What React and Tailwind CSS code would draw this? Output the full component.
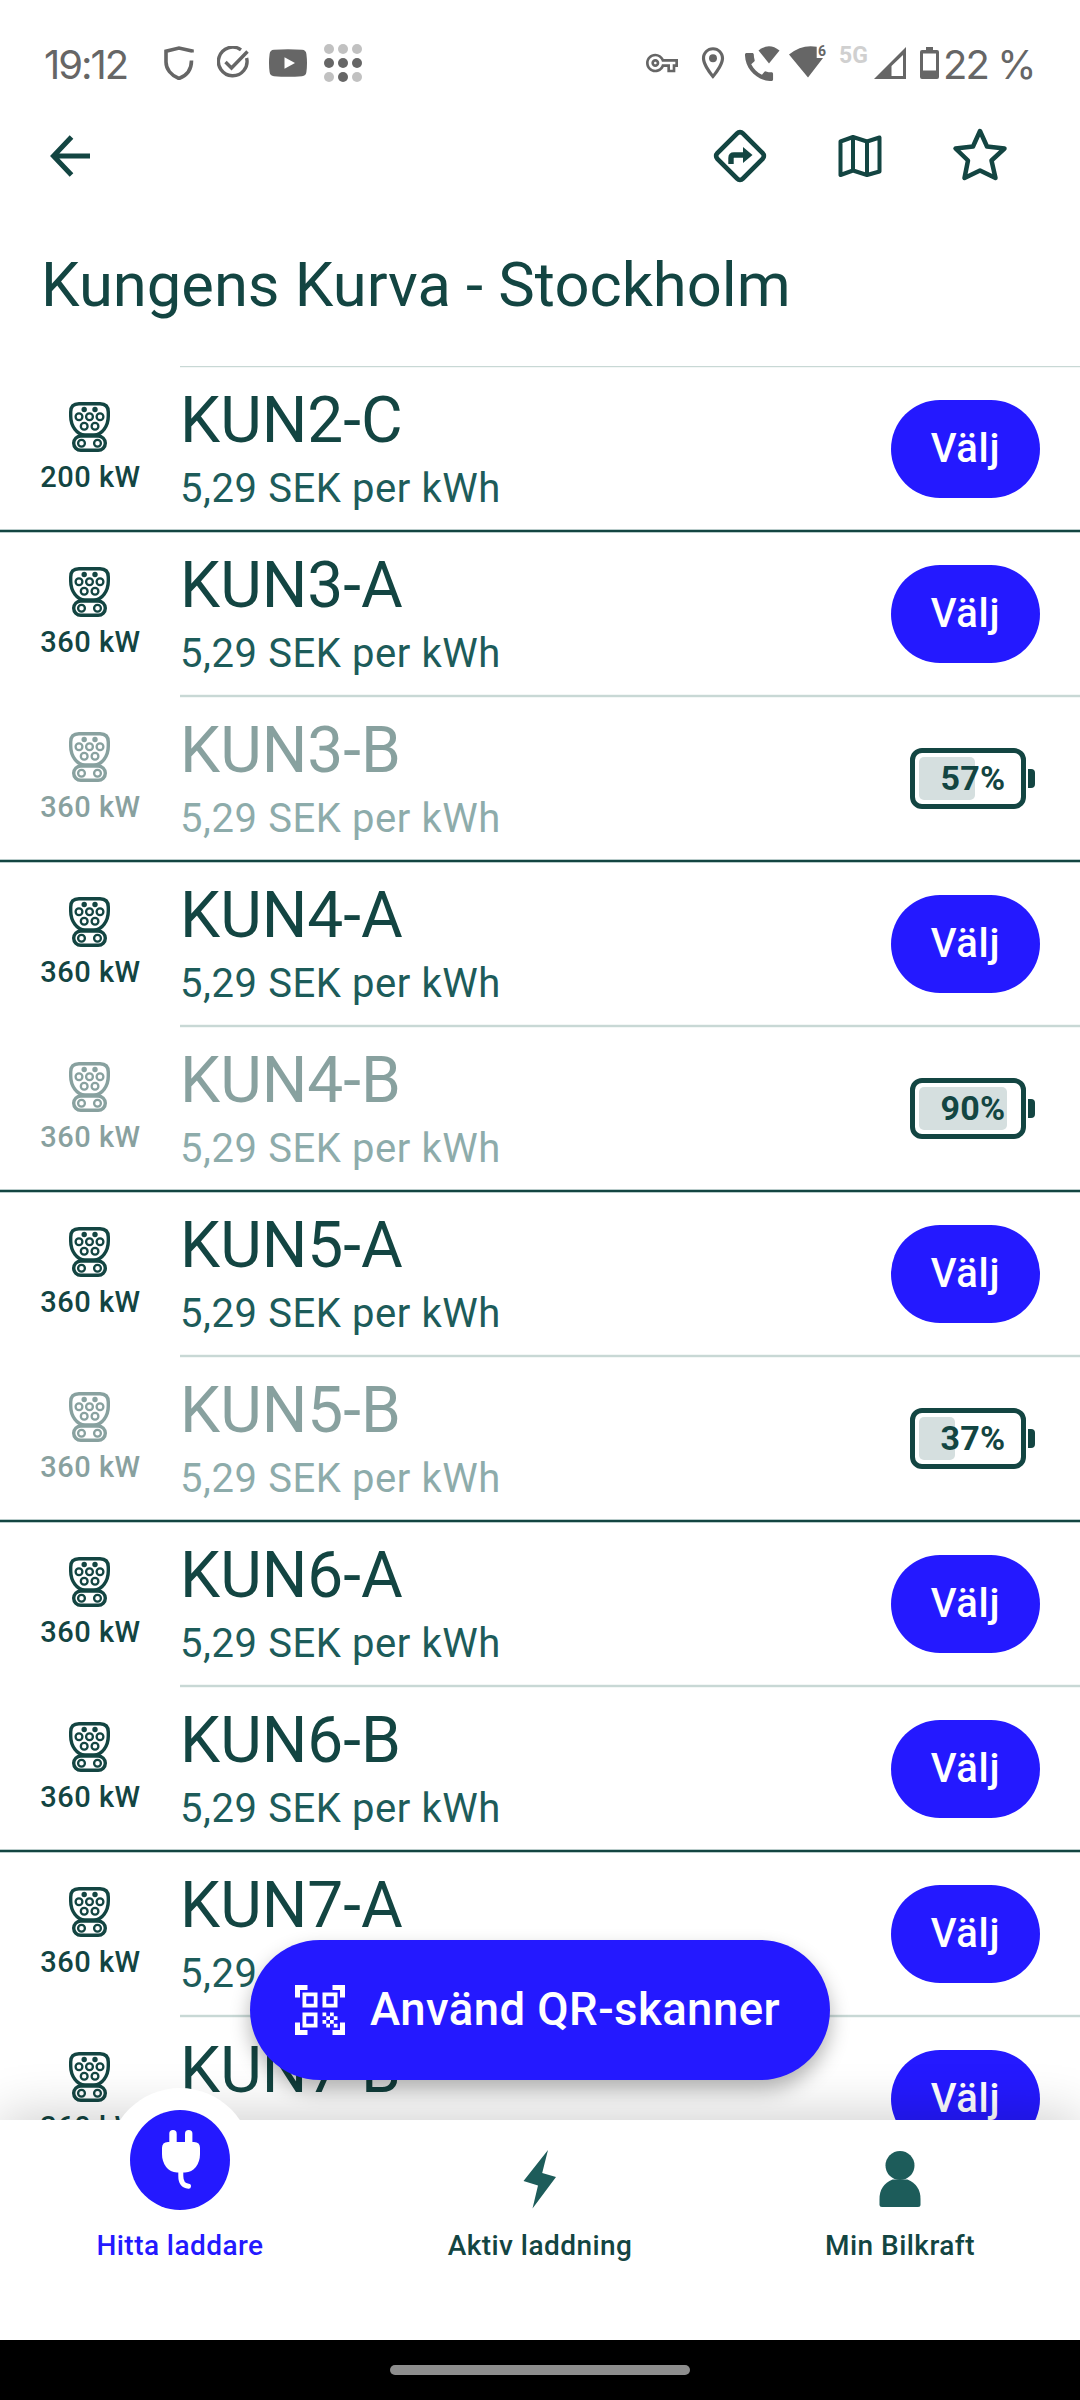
import React from 'react';
import { MdOutlineVpnKey, MdOutlineLocationOn, MdQrCodeScanner } from 'react-icons/md';

const chargers = [
  { id: 'KUN2-C', power: 200, group: true },
  { id: 'KUN3-A', power: 360 },
  { id: 'KUN3-B', power: 360, percent: 57, group: true },
  { id: 'KUN4-A', power: 360 },
  { id: 'KUN4-B', power: 360, percent: 90, group: true },
  { id: 'KUN5-A', power: 360 },
  { id: 'KUN5-B', power: 360, percent: 37, group: true },
  { id: 'KUN6-A', power: 360 },
  { id: 'KUN6-B', power: 360, group: true },
  { id: 'KUN7-A', power: 360 },
  { id: 'KUN7-B', power: 360, group: true },
];

const StatusBar = () => (
  <div className="h-[126px] flex items-center justify-between pl-[44px] pr-[45px] text-[#666666]">
    <div className="flex items-center">
      <span className="w-[120px] pt-[3px] text-[40px] leading-none tracking-[-2px] font-[Inter,sans-serif]">19:12</span>

      {/* Shield */}
      <svg className="w-[30px] h-[34px]" viewBox="0 0 30 34" fill="none" stroke="currentColor" strokeWidth="3.6">
        <path d="M28 6.5V5L15 2L2 5.2V16C2 23 7 29.5 15 32.5C23 29.5 27.5 23 27.5 14.5" />
      </svg>

      {/* Check */}
      <svg className="w-[32px] h-[34px] ml-[23px]" viewBox="0 0 32 34" fill="none" stroke="currentColor" strokeWidth="3.4">
        <path d="M24 3.8A14.3 14.3 0 1 0 29.6 12" />
        <path d="M8.5 16L14.5 22L30.5 5.5" />
      </svg>

      {/* YouTube */}
      <svg className="w-[38px] h-[28px] ml-[20px]" viewBox="0 0 38 28">
        <path fill="currentColor" d="M5 .8Q19-.4 33 .8Q37 1 37.4 5Q38.6 14 37.4 23Q37 27 33 27.2Q19 28.4 5 27.2Q1 27 .6 23Q-.6 14 .6 5Q1 1 5 .8Z" />
        <path fill="#fff" d="M15.5 8.2L26 14L15.5 19.8Z" />
      </svg>

      {/* Dot grid */}
      <svg className="w-[38px] h-[38px] ml-[17px]" viewBox="0 0 38 38" fill="currentColor">
        <g opacity="0.4">
          <circle cx="5" cy="5" r="5" />
          <circle cx="19" cy="5" r="5" />
          <circle cx="33" cy="5" r="5" />
          <circle cx="5" cy="33" r="5" />
          <circle cx="33" cy="33" r="5" />
        </g>
        <circle cx="5" cy="19" r="5" />
        <circle cx="19" cy="19" r="5" />
        <circle cx="33" cy="19" r="5" />
        <circle cx="19" cy="33" r="5" />
      </svg>
    </div>

    <div className="flex items-center">
      <MdOutlineVpnKey className="w-[32px] h-[32px]" />
      <MdOutlineLocationOn className="w-[38px] h-[38px] ml-[16px]" />

      {/* Wifi calling */}
      <svg className="w-[35px] h-[35px] ml-[13px]" viewBox="0 0 35 35" fill="currentColor">
        <path d="M13.5 4.5Q24-4 34.5 4.5L24 17.5Z" />
        <path
          transform="translate(-4.7 2.3) scale(1.56)"
          d="M20.01 15.38c-1.23 0-2.42-.2-3.53-.56a.977.977 0 0 0-1.01.24l-1.57 1.97c-2.83-1.35-5.48-3.9-6.89-6.83l1.95-1.66c.27-.28.35-.67.24-1.02-.37-1.11-.56-2.3-.56-3.53 0-.54-.45-.99-.99-.99H4.19C3.65 3 3 3.24 3 3.99 3 13.28 10.73 21 20.01 21c.71 0 .99-.63.99-1.18v-3.45c0-.54-.45-.99-.99-.99z"
        />
      </svg>

      {/* Wifi 6 */}
      <svg className="w-[38px] h-[34px] ml-[9px] overflow-visible" viewBox="0 0 38 34">
        <path fill="currentColor" d="M0 8.5Q13-2 27.7 .8V12H34L19 31.5Z" />
        <text x="29" y="10.3" fontSize="14" fontWeight="700" fontFamily="Roboto" fill="currentColor">6</text>
      </svg>

      <span className="w-[28px] text-[23px] leading-none font-bold text-[#d0d0d0] font-[Roboto,sans-serif] ml-[12px] mb-[16px]">5G</span>

      {/* Mobile signal */}
      <svg className="w-[32px] h-[32px] ml-[7px]" viewBox="0 0 32 32">
        <path fill="currentColor" fillRule="evenodd" d="M32 0V32H0ZM29 8L17.5 19V29H29Z" />
      </svg>

      {/* Battery */}
      <svg className="w-[19px] h-[32px] ml-[14px]" viewBox="0 0 19 32">
        <path fill="currentColor" fillRule="evenodd" d="M6 0H13V3H17Q19 3 19 5V30Q19 32 17 32H2Q0 32 0 30V5Q0 3 2 3H6ZM3 6.5V23.5H16V6.5Z" />
      </svg>

      <span className="w-[96px] pl-[4px] pt-[3px] text-[40px] leading-none tracking-[-1.9px] whitespace-nowrap font-[Inter,sans-serif]">22 %</span>
    </div>
  </div>
);

const AppBar = () => (
  <div className="h-[60px] flex items-center justify-between pl-[50px] pr-[72px]">
    <svg className="w-[40px] h-[42px]" viewBox="0 0 40 42" fill="none" stroke="currentColor" strokeWidth="5">
      <path d="M21.5 2L3.5 21L21.5 40M3.5 21H40" />
    </svg>

    <div className="flex items-center">
      <svg className="w-[56px] h-[56px]" viewBox="0 0 56 56">
        <rect x="10" y="10" width="36" height="36" rx="4" transform="rotate(45 28 28)" fill="none" stroke="currentColor" strokeWidth="4.8" />
        <path d="M19 36V30Q19 27 22 27H32" fill="none" stroke="currentColor" strokeWidth="5.4" />
        <path d="M31 19L40.5 27L31 35Z" fill="currentColor" />
      </svg>
      <svg className="w-[44px] h-[44px] ml-[70px]" viewBox="0 0 44 44" fill="none" stroke="currentColor" strokeWidth="4" strokeLinejoin="round">
        <path d="M2.5 7.5L15 3L29 7.5L41.5 3.5V37.5L29 41L15 36.5L2.5 41Z" />
        <path d="M15 3V36.5M29 7.5V41" />
      </svg>
      <svg className="w-[56px] h-[56px] ml-[70px]" viewBox="0 0 56 56" fill="none" stroke="currentColor" strokeWidth="4.5" strokeLinejoin="round">
        <path d="M28 3L35 18.5L52.5 20.5L39.5 32.5L43.5 50L28 42.5L12.5 50L16 32.5L3.5 20.5L21 18.5Z" />
      </svg>
    </div>
  </div>
);

const CcsIcon = () => (
  <svg className="w-[41px] h-[50px] mr-[2px]" viewBox="0 0 41 50" fill="none" stroke="currentColor" strokeWidth="3.4">
    <path d="M10 1.7H31Q39.3 1.7 39.3 10V14C39.3 24 33 33 25 33H16C8 33 1.7 24 1.7 14V10Q1.7 1.7 10 1.7Z" />
    <rect x="4.7" y="34" width="31.6" height="14.3" rx="7.1" />
    <circle cx="15.2" cy="7.5" r="2.7" fill="currentColor" stroke="none" />
    <circle cx="26" cy="7.5" r="2.7" fill="currentColor" stroke="none" />
    <g strokeWidth="2.3">
      <circle cx="10" cy="14.8" r="3.4" />
      <circle cx="20.5" cy="14.8" r="3.4" />
      <circle cx="31" cy="14.8" r="3.4" />
      <circle cx="15.2" cy="24.3" r="3.4" />
      <circle cx="26" cy="24.3" r="3.4" />
      <circle cx="12.5" cy="41.2" r="3.4" />
      <circle cx="28.5" cy="41.2" r="3.4" />
    </g>
  </svg>
);

const BatteryLevel = ({ percent }) => (
  <div className="flex items-center gap-[2px] mr-[45px]">
    <div className="relative w-[116px] h-[61px] rounded-[12px] border-[5px] border-[#134542] p-[4px]">
      <div className="h-full rounded-[5px] bg-[#d5dfdf]" style={{ width: `${percent}%` }}></div>
      <span className="absolute inset-0 pl-[10px] flex items-center justify-center text-[34px] tracking-[0.2px] font-bold">{percent}%</span>
    </div>
    <div className="w-[7px] h-[19px] rounded-r-[4px] bg-[#134542]"></div>
  </div>
);

const ChargerRow = ({ charger }) => {
  const busy = charger.percent !== undefined;
  return (
    <div className="shrink-0">
      <div className="h-[161px] flex items-start">
        <div className={`flex-1 h-full flex ${busy ? 'opacity-50' : ''}`}>
          <div className="w-[180px] pt-[34px] flex flex-col items-center gap-[9px]">
            <CcsIcon />
            <span className="pl-px text-[29px] leading-[32px] font-medium tracking-[0.5px] whitespace-nowrap">{charger.power} kW</span>
          </div>
          <div className="pt-[21px] flex flex-col gap-[12px]">
            <span className="text-[64px] leading-[64px]">{charger.id}</span>
            <span className="text-[40px] leading-[48px] tracking-[0.58px] text-[#1d5c5a]">5,29 SEK per kWh</span>
          </div>
        </div>
        {busy ? (
          <div className="pt-[50px]">
            <BatteryLevel percent={charger.percent} />
          </div>
        ) : (
          <button className="w-[149px] h-[98px] mt-[31.5px] mr-[40px] rounded-full bg-[#2419ff] text-white text-[40px] tracking-[0.7px] font-medium">Välj</button>
        )}
      </div>
      {charger.group ? (
        <div className="h-[4px] bg-[#134542] border-y border-[#b9cccb]"></div>
      ) : (
        <div className="h-[4px] ml-[180px] bg-[#c8d8d5] border-y border-[#f3f7f6]"></div>
      )}
    </div>
  );
};

const NavBar = () => (
  <div className="relative z-10 h-[220px] grid grid-cols-3 bg-white text-[28px] font-medium tracking-[0.45px] shadow-[0_-4px_50px_rgba(0,0,0,0.2)]">
    {/* White bump behind the active tab */}
    <div className="absolute left-[108px] top-[-32px] w-[144px] h-[144px] rounded-full bg-white"></div>

    <div className="relative flex flex-col items-center text-[#2419ff]">
      <div className="w-[100px] h-[100px] mt-[-10px] rounded-full bg-[#2419ff] flex justify-center pt-[20px] pl-[2px]">
        <svg className="w-[38px] h-[59px]" viewBox="0 0 38 59" fill="#fff">
          <rect x="7.3" y="0" width="7.4" height="20" rx="3.7" />
          <rect x="23" y="0" width="7.4" height="20" rx="3.7" />
          <path d="M6 12H32Q38 12 38 18V24C38 34 32 42.5 23 42.5H15C6 42.5 0 34 0 24V18Q0 12 6 12Z" />
          <path d="M18.8 40V46Q18.8 55.5 26.5 56.2" fill="none" stroke="#fff" strokeWidth="5" strokeLinecap="round" />
        </svg>
      </div>
      <span className="mt-[20px] leading-[32px]">Hitta laddare</span>
    </div>

    <div className="relative flex flex-col items-center pt-[30px]">
      <svg className="w-[34px] h-[59px] fill-[#1d5c5a]" viewBox="0 0 34 59">
        <path d="M25 0L19.2 23L33 27L9.5 58.5L15 35.5L.5 31Z" />
      </svg>
      <span className="mt-[21px] leading-[32px]">Aktiv laddning</span>
    </div>

    <div className="relative flex flex-col items-center pt-[30px]">
      <svg className="w-[42px] h-[59px] mr-px fill-[#1d5c5a]" viewBox="0 0 42 59">
        <circle cx="21" cy="15.5" r="14.5" />
        <path d="M13.5 29.5H28.5Q41.5 35 41.5 49V54.5Q41.5 57 39 57H3Q.5 57 .5 54.5V49Q.5 35 13.5 29.5Z" />
      </svg>
      <span className="mt-[21px] leading-[32px]">Min Bilkraft</span>
    </div>
  </div>
);

const App = () => {
  return (
    <div className="relative w-[1080px] h-[2400px] flex flex-col overflow-hidden bg-white text-[#134542] font-[Roboto,sans-serif]">
      <StatusBar />
      <AppBar />

      <div className="h-[180px] shrink-0 pl-[41px] pt-[63px]">
        <h1 className="text-[61.5px] leading-[72px] whitespace-nowrap">Kungens Kurva - Stockholm</h1>
      </div>

      {/* Charger list */}
      <div className="flex-1 min-h-0 flex flex-col overflow-hidden">
        <div className="shrink-0 h-[2px] ml-[180px] bg-[#c8d8d5] border-b border-[#f3f7f6]"></div>
        {chargers.map((charger) => (
          <ChargerRow key={charger.id} charger={charger} />
        ))}
      </div>

      <NavBar />

      {/* Gesture bar */}
      <div className="relative z-10 h-[60px] bg-black flex items-center justify-center">
        <div className="w-[300px] h-[10px] rounded-full bg-[#8e8e8e]"></div>
      </div>

      {/* Floating QR button */}
      <button className="absolute z-20 left-[250px] top-[1940px] w-[580px] h-[140px] rounded-full bg-[#2419ff] text-white text-[45.5px] tracking-[0.45px] font-medium flex items-center pl-[40px] gap-[20px] whitespace-nowrap shadow-[0_10px_20px_rgba(0,0,0,0.3)]">
        <MdQrCodeScanner className="w-[60px] h-[60px] shrink-0" />
        Använd QR-skanner
      </button>
    </div>
  );
};

export default App;
